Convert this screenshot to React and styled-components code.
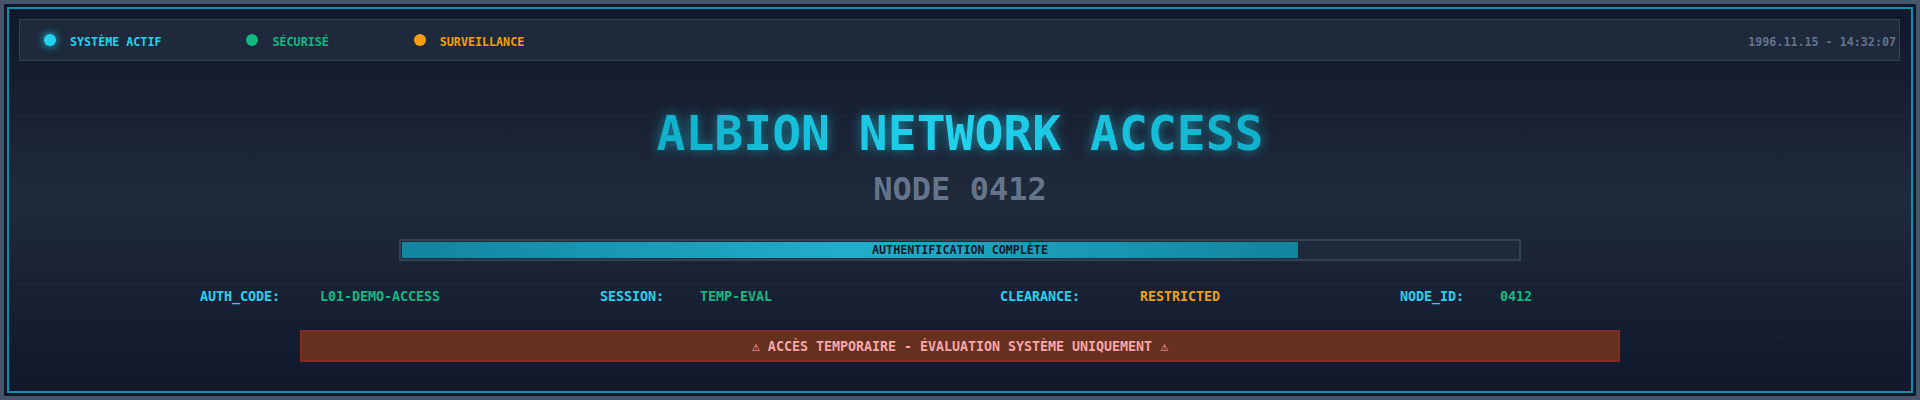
import styled, { createGlobalStyle } from "styled-components";

const GlobalStyle = createGlobalStyle`
  html, body {
    margin: 0;
    padding: 0;
    background: #475569;
  }
  body {
    font-family: "DejaVu Sans Mono", "Liberation Mono", monospace;
  }
`;

const statuses = [
  { label: "SYSTÈME ACTIF", color: "#22d3ee", glow: true },
  { label: "SÉCURISÉ", color: "#10b981" },
  { label: "SURVEILLANCE", color: "#f59e0b" },
];

const infos = [
  { label: "AUTH_CODE:", value: "L01-DEMO-ACCESS", color: "#10b981", width: 120 },
  { label: "SESSION:", value: "TEMP-EVAL", color: "#10b981", width: 100 },
  { label: "CLEARANCE:", value: "RESTRICTED", color: "#f59e0b", width: 140 },
  { label: "NODE_ID:", value: "0412", color: "#10b981", width: 100 },
];

const progress = 80.3;

function App() {
  return (
    <>
      <GlobalStyle />
      <Outer>
        <Frame>
          <Screen>
            <StatusBar>
              {statuses.map((s) => (
                <StatusItem key={s.label}>
                  <Dot color={s.color} glow={s.glow} />
                  <StatusLabel color={s.color}>{s.label}</StatusLabel>
                </StatusItem>
              ))}
              <Clock>1996.11.15 - 14:32:07</Clock>
            </StatusBar>

            <Title>ALBION NETWORK ACCESS</Title>
            <Subtitle>NODE 0412</Subtitle>

            <Track>
              <Fill style={{ width: progress + "%" }} />
              <TrackText>AUTHENTIFICATION COMPLÈTE</TrackText>
            </Track>

            <InfoRow>
              {infos.map((i) => (
                <InfoItem key={i.label}>
                  <InfoLabel width={i.width}>{i.label}</InfoLabel>
                  <InfoValue color={i.color}>{i.value}</InfoValue>
                </InfoItem>
              ))}
            </InfoRow>

            <Warning>⚠ ACCÈS TEMPORAIRE - ÉVALUATION SYSTÈME UNIQUEMENT ⚠</Warning>
          </Screen>
        </Frame>
      </Outer>
    </>
  );
}

export default App;

const Outer = styled.div`
  padding: 4px;
  height: 400px;
  box-sizing: border-box;
`;

const Frame = styled.div`
  height: 100%;
  box-sizing: border-box;
  padding: 3px;
  background: #0f172a;
`;

const Screen = styled.div`
  height: 100%;
  box-sizing: border-box;
  border: 2px solid #168aa6;
  padding: 10px 10px 0 10px;
  display: flex;
  flex-direction: column;
  align-items: center;
  background:
    repeating-linear-gradient(0deg, rgba(255, 255, 255, 0.012) 0px, rgba(255, 255, 255, 0.012) 1px, transparent 1px, transparent 3px),
    linear-gradient(180deg, #0f172a 0%, #1e293b 50%, #0f172a 100%);
`;

const StatusBar = styled.div`
  align-self: stretch;
  height: 42px;
  box-sizing: border-box;
  margin-right: 1px;
  border: 1px solid #334155;
  background: #1e293b;
  display: flex;
  align-items: center;
  gap: 85px;
  padding: 0 3px 0 24px;
`;

const StatusItem = styled.div`
  display: flex;
  align-items: center;
  gap: 14px;
`;

const Dot = styled.span`
  width: 12px;
  height: 12px;
  border-radius: 50%;
  background: ${(p) => p.color};
  box-shadow: ${(p) => (p.glow ? `0 0 8px ${p.color}` : "none")};
`;

const StatusLabel = styled.span`
  padding-top: 4px;
  color: ${(p) => p.color};
  font-size: 11.7px;
  font-weight: bold;
`;

const Clock = styled.span`
  margin-left: auto;
  padding-top: 4px;
  color: #64748b;
  font-size: 11.7px;
  font-weight: bold;
`;

const Title = styled.h1`
  margin: 48px 0 0;
  font-size: 48px;
  line-height: 48px;
  font-weight: bold;
  background: linear-gradient(90deg, #0fb0cb 0%, #22d3ee 50%, #0fb0cb 100%);
  -webkit-background-clip: text;
  background-clip: text;
  color: transparent;
  filter: drop-shadow(0 0 6px rgba(34, 211, 238, 0.55));
`;

const Subtitle = styled.div`
  margin-top: 16px;
  font-size: 32px;
  line-height: 32px;
  font-weight: bold;
  color: #64748b;
`;

const Track = styled.div`
  position: relative;
  margin-top: 34px;
  width: 1122px;
  height: 22px;
  box-sizing: border-box;
  border: 2px solid #334155;
  padding: 1px;
  background: #1e293b;
`;

const Fill = styled.div`
  height: 100%;
  background: linear-gradient(90deg, #12849e 0%, #21aecb 50%, #12849e 100%);
`;

const TrackText = styled.span`
  position: absolute;
  inset: 0;
  display: flex;
  align-items: center;
  justify-content: center;
  font-size: 11.7px;
  font-weight: bold;
  color: #0f172a;
`;

const InfoRow = styled.div`
  margin-top: 29px;
  width: 1520px;
  display: grid;
  grid-template-columns: repeat(4, 1fr);
  column-gap: 80px;
`;

const InfoItem = styled.div`
  display: flex;
  font-size: 13.3px;
  line-height: 13px;
  font-weight: bold;
`;

const InfoLabel = styled.span`
  width: ${(p) => p.width}px;
  color: #22d3ee;
`;

const InfoValue = styled.span`
  color: ${(p) => p.color};
`;

const Warning = styled.div`
  margin-top: 27px;
  width: 1320px;
  height: 32px;
  box-sizing: border-box;
  border: 2px solid #862c27;
  background: #66301f;
  display: flex;
  align-items: center;
  justify-content: center;
  color: #fca5a5;
  font-size: 13.3px;
  font-weight: bold;
`;
